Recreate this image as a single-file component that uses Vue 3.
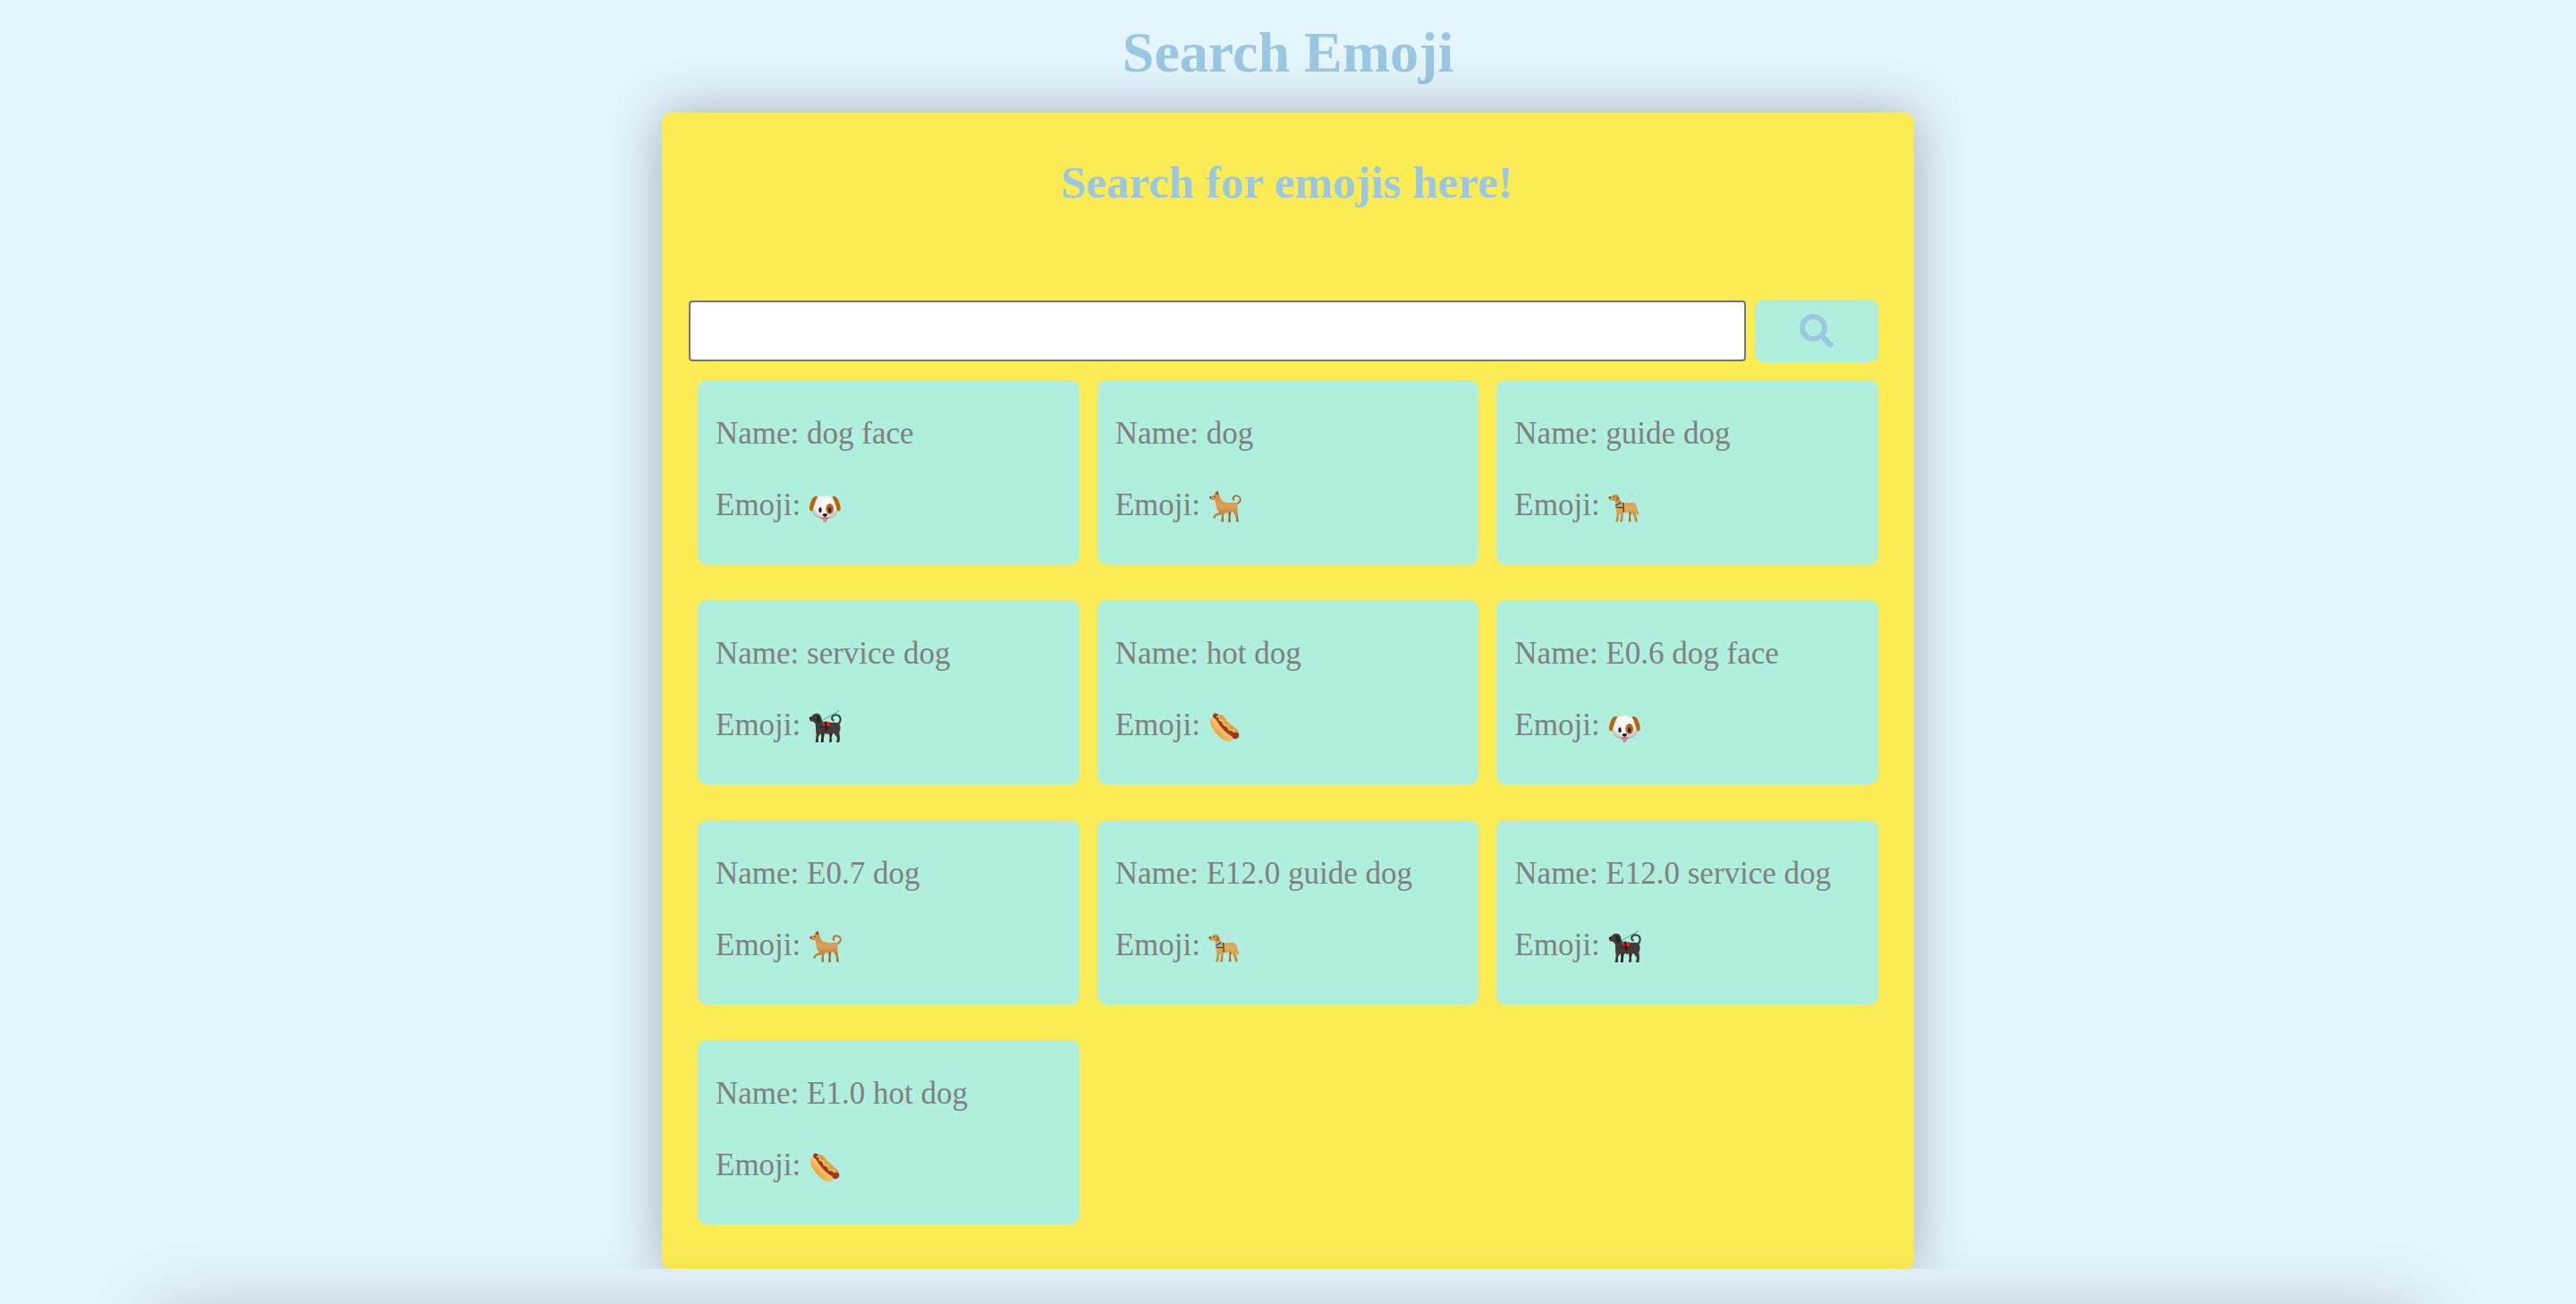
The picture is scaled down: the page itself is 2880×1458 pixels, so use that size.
<script setup>
import { ref } from 'vue'

const query = ref('')

const results = [
  { name: 'dog face', icon: 'face' },
  { name: 'dog', icon: 'dog' },
  { name: 'guide dog', icon: 'guide' },
  { name: 'service dog', icon: 'service' },
  { name: 'hot dog', icon: 'hotdog' },
  { name: 'E0.6 dog face', icon: 'face' },
  { name: 'E0.7 dog', icon: 'dog' },
  { name: 'E12.0 guide dog', icon: 'guide' },
  { name: 'E12.0 service dog', icon: 'service' },
  { name: 'E1.0 hot dog', icon: 'hotdog' }
]
</script>

<template>
  <div class="page">
    <svg class="sprite" aria-hidden="true">
      <defs>
        <radialGradient id="fur-white" cx=".5" cy=".35" r=".65">
          <stop offset="0" stop-color="#fff" />
          <stop offset=".65" stop-color="#f1efee" />
          <stop offset="1" stop-color="#b9b3ae" />
        </radialGradient>
        <linearGradient id="fur-tan" x1="0" y1="0" x2="0" y2="1">
          <stop offset="0" stop-color="#c98848" />
          <stop offset=".5" stop-color="#dc9f5b" />
          <stop offset="1" stop-color="#a4642b" />
        </linearGradient>
        <linearGradient id="fur-gold" x1="0" y1="0" x2="0" y2="1">
          <stop offset="0" stop-color="#c99545" />
          <stop offset=".5" stop-color="#deae5b" />
          <stop offset="1" stop-color="#bc853a" />
        </linearGradient>
        <linearGradient id="bun" x1="1" y1="0" x2="0" y2="1">
          <stop offset="0" stop-color="#d58a28" />
          <stop offset=".45" stop-color="#f8c56c" />
          <stop offset="1" stop-color="#d97a12" />
        </linearGradient>
      </defs>
      <symbol id="face" viewBox="372 24 120 120">
        <path d="M405 46c-10-3-17 4-21 14-5 12-8 25-5 31 4 6 11 4 16-2 5-8 7-30 10-43z" fill="#b8660c" />
        <path d="M455 46c10-3 17 4 21 14 5 12 8 25 5 31-4 6-11 4-16-2-5-8-7-30-10-43z" fill="#b8660c" />
        <path d="M430 43c-17 0-29 6-32 20-3 13-10 22-9 33 2 16 17 26 41 26s39-10 41-26c1-11-6-20-9-33-3-14-15-20-32-20z" fill="url(#fur-white)" />
        <ellipse cx="446" cy="87" rx="13" ry="18" fill="#b8690f" />
        <ellipse cx="414" cy="91" rx="5" ry="9" fill="#292421" />
        <ellipse cx="446" cy="91" rx="5" ry="9" fill="#292421" />
        <path d="M423 118h14v7c0 9-14 9-14 0z" fill="#f27891" />
        <path d="M422 105c0-3 16-3 16 0s-4 8-8 8-8-5-8-8z" fill="#1a1718" />
        <path d="M418 117c6 3 10 0 12-5 2 5 6 8 12 5" fill="none" stroke="#443b38" stroke-width="2" />
      </symbol>
      <symbol id="dog" viewBox="32 54 120 120">
        <path d="M128 101c11-4 16-11 14-19-3-10-17-12-22-5-3 4-2 8 0 10" fill="none" stroke="#b27238" stroke-width="6" stroke-linecap="round" />
        <path d="M102 124l9 3-3 18 2 16h-8l1-18z" fill="#96561f" />
        <path d="M40 78L56 68L59 60L66 57L71 70L75 80C78 88 86 94 98 96C110 98 120 94 127 96C134 100 133 110 132 122L134 140L137 160L129 161L127 142L118 127C108 130 98 131 90 130L86 140L86 161L78 160L80 136C70 139 64 138 60 142L56 150L50 146L58 134L72 128C62 120 60 108 60 98L57 88L46 87L40 84Z" fill="url(#fur-tan)" />
        <path d="M59 68l3-9 5-1 3 10z" fill="#9b4b3d" />
        <ellipse cx="42" cy="79" rx="3" ry="3" fill="#342b2b" />
        <circle cx="56" cy="76" r="2" fill="#3e2a20" />
      </symbol>
      <symbol id="guide" viewBox="52 54 120 120">
        <path d="M106 102l30-38" stroke="#bfc9ce" stroke-width="5" stroke-linecap="round" />
        <path d="M106 100l28-35" stroke="#eef2f4" stroke-width="2" />
        <path d="M124 124l10 4-4 14 2 18h-9l2-18z" fill="#a8732c" />
        <path d="M57 78L68 74C74 66 88 67 91 76C93 86 96 94 104 97C116 98 128 95 138 96C150 99 152 110 153 120L159 134L154 138L149 130L148 136L154 158L146 161L139 138L130 126C120 130 110 130 106 130L103 160L94 161L98 134L92 134L88 160L80 161L84 136C80 120 80 106 80 98L76 90L62 89L57 84Z" fill="url(#fur-gold)" />
        <path d="M82 73c-2 8-2 17 3 19 6 1 8-5 7-12z" fill="#b37a2e" />
        <path d="M79 107l19-12" stroke="#2860a5" stroke-width="5" />
        <path d="M81 112l22 1m2-17l2 32" stroke="#493a29" stroke-width="4" fill="none" />
        <ellipse cx="60" cy="79" rx="3" ry="3" fill="#2c2521" />
        <circle cx="75" cy="76" r="2" fill="#3f2b1e" />
      </symbol>
      <symbol id="service" viewBox="42 42 120 120">
        <path d="M92 76l54-31" stroke="#35aca6" stroke-width="3" />
        <path d="M142 90c13-8 13-26 1-31-10-4-19 2-20 9 0 4 2 6 5 8" fill="none" stroke="#423b39" stroke-width="6" stroke-linecap="round" />
        <path d="M87 118l12 1-3 14-1 17h-9l2-16zM114 118l12 2-4 14 1 15h-9l2-15z" fill="#272424" />
        <path d="M47 68C50 64 58 62 62 56C70 51 82 52 86 62C89 72 90 80 98 83C112 86 130 80 144 85C153 92 154 106 148 116L150 135L148 150L138 150L141 134L130 120C118 124 104 122 96 120L84 122L78 132L78 150L68 150L71 124C68 112 70 98 68 88L60 80L50 79Z" fill="#423b39" />
        <path d="M73 58c-3 9-3 23 4 28 8 0 9-9 7-20z" fill="#2b2625" />
        <path d="M90 81l27 1v15l-24-1z" fill="#e41d22" />
        <path d="M102 80l3 31" stroke="#1e1b1d" stroke-width="6" />
        <path d="M82 97l34 2" stroke="#252123" stroke-width="3" />
        <circle cx="51" cy="69" r="3" fill="#171516" />
      </symbol>
      <symbol id="hotdog" viewBox="32 42 120 120">
        <path d="M68 60c6-6 15-2 20 6 12 17 26 27 40 38 9 7 10 12 7 17z" fill="#e4a247" />
        <path d="M53 54c8-5 15 3 20 12 12 19 27 36 50 50 6-1 14 1 15 8 1 8-5 15-14 15-31-5-57-42-72-70-3-6-2-12 1-15z" fill="#9f3829" />
        <path d="M74 66c13 20 27 34 51 48" stroke="#dd8f78" stroke-width="11" fill="none" />
        <path d="M43 69c6-6 14-1 20 8 13 22 27 38 52 54 5 9 0 15-9 16-22 0-45-22-59-47-6-11-8-25-4-31z" fill="url(#bun)" />
        <path d="M64 64c11-4 8 5 8 11 2 4 13-1 14 5 1 8-3 12 5 13 8 0 11-1 11 6s0 10 9 9c8-2 10 2 10 7" fill="none" stroke="#f4ce20" stroke-width="5" stroke-linecap="round" />
      </symbol>
    </svg>

    <h1 class="title">Search Emoji</h1>

    <main class="panel">
      <h2 class="subtitle">Search for emojis here!</h2>

      <form class="search" @submit.prevent>
        <input v-model="query" class="search-input" type="text" aria-label="Search for emojis" />
        <button class="search-button" type="submit" aria-label="Search">
          <svg class="search-icon" viewBox="0 0 512 512" aria-hidden="true">
            <path fill="currentColor" d="M505 442.7L405.3 343c-4.5-4.5-10.6-7-17-7H372c27.6-35.3 44-79.7 44-128C416 93.1 322.9 0 208 0S0 93.1 0 208s93.1 208 208 208c48.3 0 92.7-16.4 128-44v16.3c0 6.4 2.5 12.5 7 17l99.7 99.7c9.4 9.4 24.6 9.4 33.9 0l28.3-28.3c9.4-9.4 9.4-24.6.1-34zM208 336c-70.7 0-128-57.2-128-128 0-70.7 57.2-128 128-128 70.7 0 128 57.2 128 128 0 70.7-57.2 128-128 128z" />
          </svg>
        </button>
      </form>

      <section class="results">
        <article v-for="item in results" :key="item.name" class="card">
          <p class="line">Name: {{ item.name }}</p>
          <p class="line">
            <span>Emoji:</span>
            <svg class="emoji" role="img" :aria-label="item.name"><use :href="'#' + item.icon" /></svg>
          </p>
        </article>
      </section>
    </main>

    <footer class="footer"></footer>
  </div>
</template>

<style>
body {
  background: #e5f5fe;
}
</style>

<style scoped>
.page {
  display: flex;
  flex-direction: column;
  box-sizing: border-box;
  min-height: 100vh;
  overflow: hidden;
  background: #e5f5fe;
  font-family: "Liberation Serif", "Times New Roman", serif;
  color: #808080;
}

.sprite {
  position: absolute;
  width: 0;
  height: 0;
}

.title,
.subtitle {
  margin: 0;
  text-align: center;
  color: #9ac8e2;
}

.title {
  padding: 23px 0 31px;
  font-size: 64px;
  line-height: 72px;
}

.panel {
  box-sizing: border-box;
  width: 100%;
  max-width: 1400px;
  margin: 0 auto;
  padding: 50px 40px 50px 30px;
  border-radius: 10px;
  background: #fbeb55;
  box-shadow: 0 0 60px rgba(0, 0, 0, 0.3);
}

.subtitle {
  padding-left: 8px;
  margin-bottom: 103px;
  font-size: 51px;
  line-height: 56px;
}

.search {
  display: flex;
  align-items: center;
  gap: 10px;
  margin-bottom: 20px;
}

.search-input {
  box-sizing: border-box;
  flex: 1;
  min-width: 0;
  height: 68px;
  padding: 2px 10px;
  border: 2px solid #767676;
  border-radius: 4px;
  background: #fff;
  font: inherit;
  font-size: 35px;
}

.search-button {
  display: flex;
  align-items: center;
  justify-content: center;
  width: 138px;
  height: 70px;
  padding: 0;
  border: 0;
  border-radius: 10px;
  background: #b0efde;
  color: #9ac8e2;
}

.search-icon {
  width: 38px;
  height: 38px;
}

.results {
  display: grid;
  grid-template-columns: repeat(3, 1fr);
  gap: 40px 20px;
  margin-left: 10px;
}

.card {
  display: flex;
  flex-direction: column;
  gap: 40px;
  padding: 40px 20px 43px;
  border-radius: 10px;
  background: #b0efde;
}

.line {
  display: flex;
  gap: 8px;
  margin: 0;
  font-size: 35px;
  line-height: 40px;
}

.emoji {
  width: 40px;
  height: 40px;
  margin-top: 3px;
}

.footer {
  position: relative;
  flex: 1;
  min-height: 39px;
  background: #e5f5fe;
}

.footer::after {
  content: "";
  position: absolute;
  top: calc(100% + 10px);
  left: 6%;
  right: 6%;
  height: 120px;
  border-radius: 10px;
  box-shadow: 0 0 80px rgba(0, 0, 0, 0.22);
}
</style>
